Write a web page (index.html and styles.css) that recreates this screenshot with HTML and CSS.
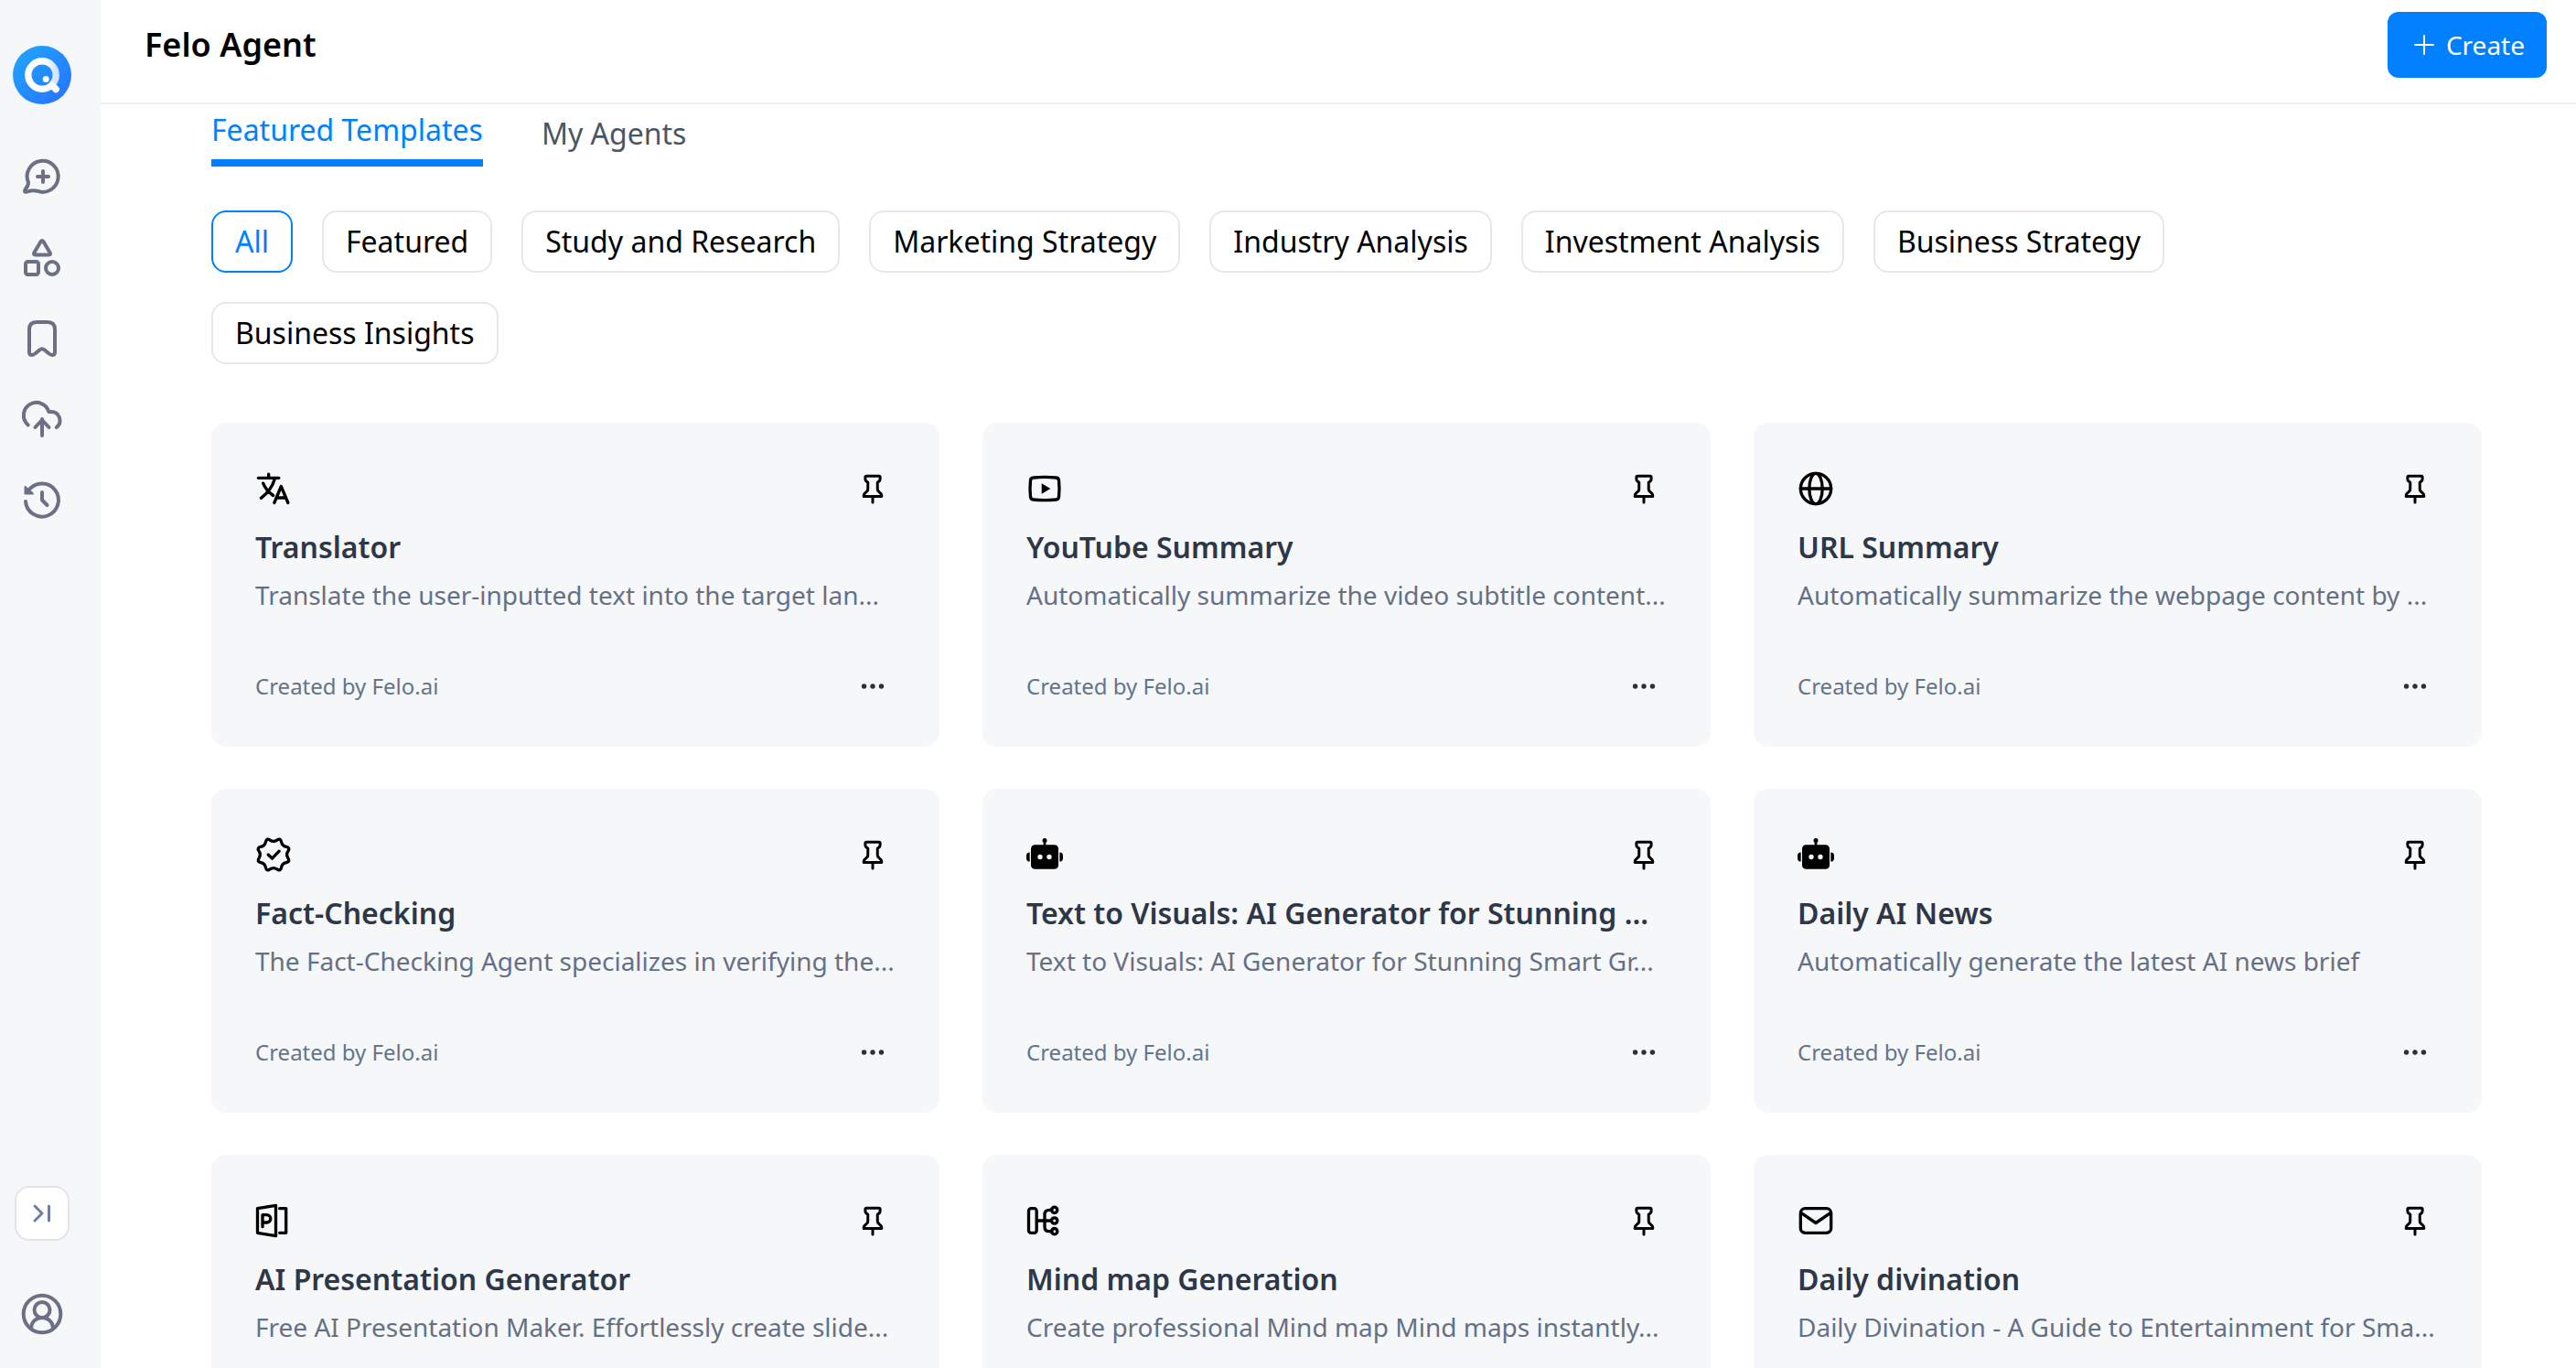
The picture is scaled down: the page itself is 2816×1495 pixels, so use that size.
FILE: index.html
```html
<!DOCTYPE html>
<html lang="en">
<head>
    <meta charset="UTF-8">
    <meta name="viewport" content="width=device-width, initial-scale=1.0">
    <title>Felo Agent</title>
    <link rel="stylesheet" href="styles.css">
</head>
<body>

<!-- Shared icons -->
<svg class="sprite" aria-hidden="true">
    <symbol id="pin" viewBox="0 0 24 24">
        <path d="M7.5 2.8h9q.9 0 .9.9v1.5q0 .9-.8 1.5l-1.1.8v4.8q0 1 .8 1.7l1.3 1.3q.9.8.9 1.8v.6H5.5v-.6q0-1 .9-1.8l1.3-1.3q.8-.7.8-1.7V7.5l-1.1-.8q-.8-.6-.8-1.5V3.7q0-.9.9-.9zM12 17.6V22"/>
    </symbol>
    <symbol id="dots" viewBox="0 0 24 24">
        <circle cx="5.7" cy="12" r="1.8"/><circle cx="12" cy="12" r="1.8"/><circle cx="18.3" cy="12" r="1.8"/>
    </symbol>
    <symbol id="robot" viewBox="0 0 24 24">
        <rect x="3" y="5.500" width="18" height="16" rx="2.6"/>
        <rect x="11.2" y="2.500" width="1.6" height="4"/>
        <circle cx="12" cy="2.700" r="1.5"/>
        <path d="M2.2 10.500v6A2.2 2.2 0 0 1 0 14.500v-2a2.2 2.2 0 0 1 2.2-2zM21.8 10.500v6a2.2 2.2 0 0 0 2.2-2v-2a2.2 2.2 0 0 0-2.2-2z"/>
        <circle class="eye" cx="9" cy="13.500" r="1.6"/><circle class="eye" cx="15" cy="13.500" r="1.6"/>
    </symbol>
</svg>

<aside class="sidebar">
    <a class="logo" href="#" aria-label="Felo">
        <svg viewBox="0 0 64 64">
            <defs>
                <linearGradient id="logoBg" x1="0" y1="0" x2="1" y2="1">
                    <stop offset="0" stop-color="#1fa8ff"/>
                    <stop offset="1" stop-color="#2970ff"/>
                </linearGradient>
                <linearGradient id="logoRing" x1="0" y1="0" x2="1" y2="0">
                    <stop offset="0.6" stop-color="#fff"/>
                    <stop offset="1" stop-color="#cfe5ff"/>
                </linearGradient>
            </defs>
            <circle cx="32" cy="32" r="32" fill="url(#logoBg)"/>
            <circle cx="32" cy="32" r="15.2" fill="none" stroke="url(#logoRing)" stroke-width="7.4"/>
            <path d="M43 43.5l4.2 4" stroke="#fff" stroke-width="7.4" stroke-linecap="round"/>
            <circle cx="36.2" cy="36.6" r="3.5" fill="#fff"/>
        </svg>
    </a>
    <nav class="side-nav">
        <a href="#" aria-label="New chat">
            <svg viewBox="0 0 48 48"><path d="M9 29.500A17 17 0 1 1 18.500 38.700Q14 37.600 7 39.600 3.600 40.400 5.600 37 9 33 9 29.500zM25 17v12M19 23h12"/></svg>
        </a>
        <a href="#" aria-label="Topics">
            <svg viewBox="0 0 48 48"><path d="M22.400 6.200 15.300 18.300q-1.300 2.200 1.500 2.200h14.400q2.800 0 1.500-2.200L25.600 6.200q-1.600-2.300-3.200 0z"/><rect x="6" y="28" width="14" height="14" rx="2.500"/><circle cx="35" cy="35" r="7"/></svg>
        </a>
        <a href="#" aria-label="Bookmarks">
            <svg viewBox="0 0 48 48"><path d="M10 14q0-8 8-8h12q8 0 8 8v25q0 3-3 3-1.500 0-4-2l-4.500-3.800q-2.500-2-5 0L17 40q-2.500 2-4 2-3 0-3-3z"/></svg>
        </a>
        <a href="#" aria-label="Upload">
            <svg viewBox="0 0 48 48"><path d="M8.700 30.500A14 14 0 1 1 31.300 16H34A9.500 9.500 0 0 1 39.800 33M24 42V24M16.500 33 24 25l7.500 8"/></svg>
        </a>
        <a href="#" aria-label="History">
            <svg viewBox="0 0 48 48"><path d="M9 14.500A18 18 0 1 1 6 26M24 16v8.500l5.500 5.500"/><path class="solid" d="M5.500 10v7.500H14z"/></svg>
        </a>
    </nav>
    <button class="expand" type="button" aria-label="Expand sidebar">
        <svg viewBox="0 0 24 24"><path d="M4 4l8 8-8 8M19.500 4v16"/></svg>
    </button>
    <a class="profile" href="#" aria-label="Profile">
        <svg viewBox="0 0 48 48"><circle cx="24" cy="24" r="20.300"/><circle cx="24" cy="19.500" r="8.500"/><path d="M12 40c0-7 5-12 12-12s12 5 12 12"/></svg>
    </a>
</aside>

<div class="page">
    <header class="topbar">
        <h1>Felo Agent</h1>
        <button class="create" type="button">
            <svg viewBox="0 0 28 28"><path d="M14 4v20M4 14h20"/></svg>
            Create
        </button>
    </header>

    <main class="content">
        <nav class="tabs">
            <a class="active" href="#">Featured Templates</a>
            <a href="#">My Agents</a>
        </nav>

        <div class="filters">
            <button class="active" type="button">All</button>
            <button type="button">Featured</button>
            <button type="button">Study and Research</button>
            <button type="button">Marketing Strategy</button>
            <button type="button">Industry Analysis</button>
            <button type="button">Investment Analysis</button>
            <button type="button">Business Strategy</button>
            <button type="button">Business Insights</button>
        </div>

        <div class="cards">
            <article class="card">
                <div class="card-head">
                    <svg class="icon" viewBox="0 0 24 24"><path d="M2 5h13.500M8.800 2.500V5M12.800 5.500C11.500 10 8 15 3.800 18.200M5.200 8.500c1.300 3.200 3.600 6 6.600 8M12.500 21.300 17 10.500l4.500 10.800M13.800 18h6.400"/></svg>
                    <button type="button" aria-label="Pin"><svg class="pin"><use href="#pin"/></svg></button>
                </div>
                <h2>Translator</h2>
                <p>Translate the user-inputted text into the target lan...</p>
                <div class="card-foot">
                    <span>Created by Felo.ai</span>
                    <button type="button" aria-label="More"><svg class="dots"><use href="#dots"/></svg></button>
                </div>
            </article>
            <article class="card">
                <div class="card-head">
                    <svg class="icon" viewBox="0 0 24 24"><path d="M4.500 4.800Q12 4 19.500 4.800q1.600.1 1.800 1.800.6 5.400 0 10.800-.2 1.700-1.800 1.800-7.500.8-15 0-1.600-.1-1.800-1.800-.6-5.400 0-10.800.2-1.700 1.800-1.800z"/><path class="fill" d="M10 8.600v6.800l5.800-3.400z"/></svg>
                    <button type="button" aria-label="Pin"><svg class="pin"><use href="#pin"/></svg></button>
                </div>
                <h2>YouTube Summary</h2>
                <p>Automatically summarize the video subtitle content...</p>
                <div class="card-foot">
                    <span>Created by Felo.ai</span>
                    <button type="button" aria-label="More"><svg class="dots"><use href="#dots"/></svg></button>
                </div>
            </article>
            <article class="card">
                <div class="card-head">
                    <svg class="icon" viewBox="0 0 24 24"><circle cx="12" cy="12" r="10"/><ellipse cx="12" cy="12" rx="4.300" ry="10"/><path d="M2 12h20"/></svg>
                    <button type="button" aria-label="Pin"><svg class="pin"><use href="#pin"/></svg></button>
                </div>
                <h2>URL Summary</h2>
                <p>Automatically summarize the webpage content by ...</p>
                <div class="card-foot">
                    <span>Created by Felo.ai</span>
                    <button type="button" aria-label="More"><svg class="dots"><use href="#dots"/></svg></button>
                </div>
            </article>
            <article class="card">
                <div class="card-head">
                    <svg class="icon" viewBox="0 0 24 24"><path d="M21.550 14.300Q23.090 16.590 20.370 17.130 17.660 17.660 17.130 20.370 16.590 23.090 14.300 21.550 12 20 9.700 21.550 7.410 23.090 6.870 20.370 6.340 17.660 3.630 17.130.91 16.590 2.450 14.300 4 12 2.450 9.700.91 7.410 3.630 6.870 6.340 6.340 6.870 3.630 7.410.91 9.700 2.450 12 4 14.300 2.450 16.590.91 17.130 3.630 17.660 6.340 20.370 6.870 23.090 7.410 21.550 9.700 20 12 21.550 14.300zM8.500 12l2.600 2.500 4.600-4.800"/></svg>
                    <button type="button" aria-label="Pin"><svg class="pin"><use href="#pin"/></svg></button>
                </div>
                <h2>Fact-Checking</h2>
                <p>The Fact-Checking Agent specializes in verifying the...</p>
                <div class="card-foot">
                    <span>Created by Felo.ai</span>
                    <button type="button" aria-label="More"><svg class="dots"><use href="#dots"/></svg></button>
                </div>
            </article>
            <article class="card">
                <div class="card-head">
                    <svg class="icon robot"><use href="#robot"/></svg>
                    <button type="button" aria-label="Pin"><svg class="pin"><use href="#pin"/></svg></button>
                </div>
                <h2>Text to Visuals: AI Generator for Stunning ...</h2>
                <p>Text to Visuals: AI Generator for Stunning Smart Gr...</p>
                <div class="card-foot">
                    <span>Created by Felo.ai</span>
                    <button type="button" aria-label="More"><svg class="dots"><use href="#dots"/></svg></button>
                </div>
            </article>
            <article class="card">
                <div class="card-head">
                    <svg class="icon robot"><use href="#robot"/></svg>
                    <button type="button" aria-label="Pin"><svg class="pin"><use href="#pin"/></svg></button>
                </div>
                <h2>Daily AI News</h2>
                <p>Automatically generate the latest AI news brief</p>
                <div class="card-foot">
                    <span>Created by Felo.ai</span>
                    <button type="button" aria-label="More"><svg class="dots"><use href="#dots"/></svg></button>
                </div>
            </article>
            <article class="card">
                <div class="card-head">
                    <svg class="icon" viewBox="0 0 24 24"><path d="M1.500 4 13.500 2v20l-12-2zM16 4h4.200v16H16M4.800 16V8.200h2.800a2.500 2.500 0 0 1 0 5H4.800"/></svg>
                    <button type="button" aria-label="Pin"><svg class="pin"><use href="#pin"/></svg></button>
                </div>
                <h2>AI Presentation Generator</h2>
                <p>Free AI Presentation Maker. Effortlessly create slide...</p>
                <div class="card-foot">
                    <span>Created by Felo.ai</span>
                    <button type="button" aria-label="More"><svg class="dots"><use href="#dots"/></svg></button>
                </div>
            </article>
            <article class="card">
                <div class="card-head">
                    <svg class="icon" viewBox="0 0 24 24"><rect x="1.500" y="4" width="5.200" height="16" rx="1.600"/><path d="M7 12h9.500M16.800 5H15q-3 0-3 3v8q0 3 3 3h1.800"/><circle cx="18.400" cy="5" r="1.900"/><circle cx="18.400" cy="12" r="1.900"/><circle cx="18.400" cy="19" r="1.900"/></svg>
                    <button type="button" aria-label="Pin"><svg class="pin"><use href="#pin"/></svg></button>
                </div>
                <h2>Mind map Generation</h2>
                <p>Create professional Mind map Mind maps instantly...</p>
                <div class="card-foot">
                    <span>Created by Felo.ai</span>
                    <button type="button" aria-label="More"><svg class="dots"><use href="#dots"/></svg></button>
                </div>
            </article>
            <article class="card">
                <div class="card-head">
                    <svg class="icon" viewBox="0 0 24 24"><rect x="2" y="4" width="20" height="16" rx="3"/><path d="M2.500 7 12 13.500 21.500 7"/></svg>
                    <button type="button" aria-label="Pin"><svg class="pin"><use href="#pin"/></svg></button>
                </div>
                <h2>Daily divination</h2>
                <p>Daily Divination - A Guide to Entertainment for Sma...</p>
                <div class="card-foot">
                    <span>Created by Felo.ai</span>
                    <button type="button" aria-label="More"><svg class="dots"><use href="#dots"/></svg></button>
                </div>
            </article>
        </div>
    </main>
</div>

</body>
</html>
```
FILE: styles.css
```css
* {
    box-sizing: border-box;
}
body {
    display: flex;
    height: 100vh;
    margin: 0;
    overflow: hidden;
    background-color: #fff;
    color: #000;
    font-family: "Noto Sans", sans-serif;
    font-size: 32px;
    line-height: 48px;
}
h1, h2, p {
    margin: 0;
}
a {
    color: inherit;
    text-decoration: none;
}
button {
    margin: 0;
    padding: 0;
    border: none;
    background: none;
    color: inherit;
    font: inherit;
    cursor: pointer;
}
svg {
    display: block;
    fill: none;
    stroke-linecap: round;
    stroke-linejoin: round;
}
.sprite {
    display: none;
}

/* Sidebar */
.sidebar {
    display: flex;
    flex-direction: column;
    align-items: center;
    flex-shrink: 0;
    width: 110px;
    padding: 50px 18px 35px 0;
    background-color: #f5f7f9;
    color: #6b7085;
}
.sidebar svg {
    width: 48px;
    height: 48px;
    stroke: currentColor;
    stroke-width: 4;
}
.sidebar .logo svg {
    width: 64px;
    height: 64px;
    stroke: none;
}
.side-nav {
    display: flex;
    flex-direction: column;
    gap: 40px;
    margin-top: 56px;
}
.side-nav .solid {
    fill: currentColor;
    stroke-width: 2;
}
.expand {
    display: flex;
    align-items: center;
    justify-content: center;
    width: 60px;
    height: 60px;
    margin-top: auto;
    border: 2px solid #e2e4e8;
    border-radius: 16px;
    background-color: #fff;
    color: #727ba3;
}
.sidebar .expand svg {
    width: 24px;
    height: 24px;
    stroke-width: 3;
}
.profile {
    margin-top: 56px;
}

/* Header */
.page {
    display: flex;
    flex-direction: column;
    flex: 1;
    min-width: 0;
}
.topbar {
    display: flex;
    align-items: center;
    justify-content: space-between;
    flex-shrink: 0;
    padding: 13px 32px 27px 48px;
    border-bottom: 2px solid #eee;
}
.topbar h1 {
    font-size: 36px;
    font-weight: 600;
}
.create {
    display: flex;
    align-items: center;
    gap: 10px;
    height: 72px;
    padding: 0 24px 0 26px;
    border-radius: 12px;
    background-color: #0080ff;
    color: #fff;
    font-size: 28px;
}
.create svg {
    width: 28px;
    height: 28px;
    stroke: currentColor;
    stroke-width: 2;
}

/* Content */
.content {
    flex: 1;
    padding: 4px 103px 48px 121px;
    overflow-y: auto;
    scrollbar-width: none;
}
.tabs {
    display: flex;
    align-items: center;
    gap: 64px;
    color: #4b5563;
}
.tabs a {
    padding-bottom: 8px;
}
.tabs .active {
    border-bottom: 8px solid #0080ff;
    color: #0080ff;
}
.filters {
    display: flex;
    flex-wrap: wrap;
    gap: 32px;
    margin: 48px 0 64px;
    padding-right: 48px;
}
.filters button {
    padding: 8px 24px;
    border: 2px solid #e5e7eb;
    border-radius: 16px;
    background-color: #fff;
}
.filters .active {
    border-color: #0080ff;
    color: #0080ff;
}

/* Cards */
.cards {
    display: grid;
    grid-template-columns: repeat(3, minmax(0, 1fr));
    gap: 46px 47px;
}
.card {
    padding: 48px 48px 42px;
    border-radius: 16px;
    background-color: #f5f7f9;
}
.card-head,
.card-foot {
    display: flex;
    align-items: center;
    justify-content: space-between;
}
.card-head button,
.card-foot button {
    display: flex;
    align-items: center;
    justify-content: center;
    width: 50px;
    height: 48px;
}
.icon {
    width: 40px;
    height: 40px;
    stroke: #000;
    stroke-width: 2;
}
.icon .fill {
    fill: #000;
    stroke: none;
}
.robot {
    fill: #000;
    stroke: none;
}
.eye {
    fill: #f5f7f9;
}
.pin {
    width: 36px;
    height: 36px;
    stroke: #000;
    stroke-width: 2;
}
.dots {
    width: 36px;
    height: 36px;
    fill: #2b2f36;
}
.card h2 {
    margin-top: 16px;
    overflow: hidden;
    color: #2d3748;
    font-size: 32px;
    font-weight: 600;
    text-overflow: ellipsis;
    white-space: nowrap;
}
.card p {
    margin: 8px 0 56px;
    overflow: hidden;
    color: #667085;
    font-size: 28px;
    line-height: 40px;
    text-overflow: ellipsis;
    white-space: nowrap;
}
.card-foot {
    color: #64748b;
    font-size: 24px;
}
```
